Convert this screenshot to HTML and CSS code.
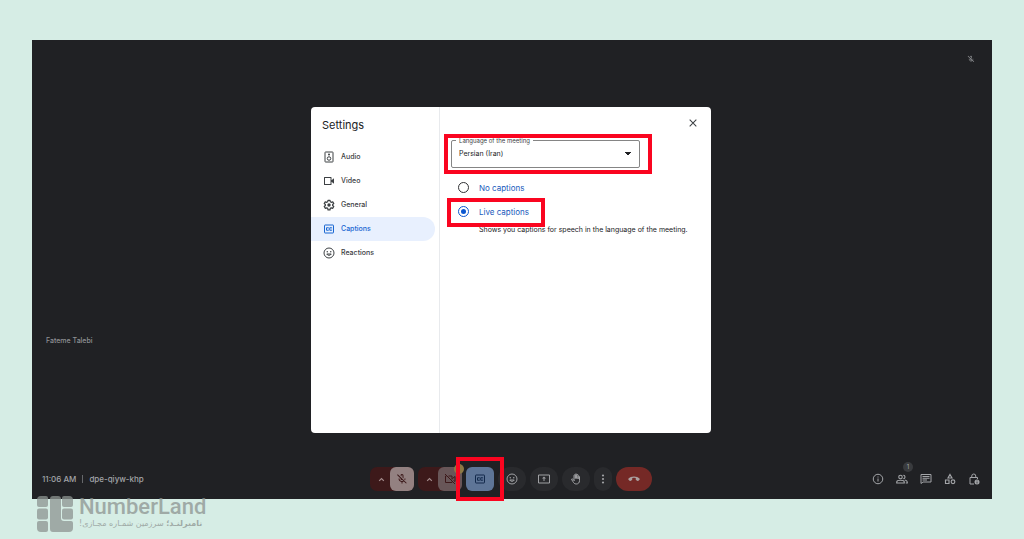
FILE: index.html
```html
<!DOCTYPE html>
<html lang="en">
<head>
<meta charset="utf-8">
<meta name="viewport" content="width=device-width, initial-scale=1">
<title>Meeting captions settings</title>
<link rel="stylesheet" href="styles.css">
</head>
<body>
<svg class="sprite" aria-hidden="true">
  <symbol id="mic-off" viewBox="0 0 24 24"><path d="M19 11h-2c0 .8-.2 1.500-.4 2.100l1.400 1.500c.6-1.100 1-2.300 1-3.600zM15 11V5a3 3 0 0 0-6-.2l2 2V5a1 1 0 0 1 2 0v4l2 2zM3.500 2.500 2.100 3.900 9 10.800V11a3 3 0 0 0 3.800 2.900l1.600 1.600A5 5 0 0 1 7 11H5a7 7 0 0 0 6 6.900V21h2v-3.100a7 7 0 0 0 2.800-1l4.300 4.300 1.400-1.400z"/></symbol>
  <symbol id="cam" viewBox="0 0 24 24"><path d="M17 10.500V5a1 1 0 0 0-1-1H3a1 1 0 0 0-1 1v14a1 1 0 0 0 1 1h13a1 1 0 0 0 1-1v-5.500l5 4v-11zM15 18H4V6h11z"/></symbol>
  <symbol id="cam-off" viewBox="0 0 24 24"><g fill="none" stroke="currentColor" stroke-width="2"><path d="M5 6H3v13h13v-2M9 6h7v7M17 11l5-4v10l-3-2M2 2l20 20"/></g></symbol>
  <symbol id="speaker" viewBox="0 0 24 24"><g fill="none" stroke="currentColor" stroke-width="2"><rect x="4" y="2" width="16" height="20" rx="1"/><circle cx="12" cy="15" r="3.500"/></g><circle cx="12" cy="7" r="2"/></symbol>
  <symbol id="gear" viewBox="0 0 24 24"><path fill="none" stroke="currentColor" stroke-width="2.500" stroke-linejoin="round" d="M10 2.500h4l.6 3 2 1.100 2.900-1 2 3.500-2.200 2v2l2.200 2-2 3.500-2.900-1-2 1.100-.6 3h-4l-.6-3-2-1.100-2.900 1-2-3.500 2.200-2v-2l-2.200-2 2-3.500 2.900 1 2-1.100z"/><circle cx="12" cy="12" r="3.400"/></symbol>
  <symbol id="cc" viewBox="0 0 24 24"><g fill="none" stroke="currentColor" stroke-width="2"><rect x="3" y="4" width="18" height="16" rx="1"/><path d="M11 10.500V9.500H7v5h4v-1M17.500 10.500V9.500h-4v5h4v-1"/></g></symbol>
  <symbol id="smile" viewBox="0 0 24 24"><g fill="none" stroke="currentColor" stroke-width="2"><circle cx="12" cy="12" r="10"/><path d="M7.500 14h9c-1.500 3.500-7.500 3.500-9 0z"/></g><circle cx="8.500" cy="9.500" r="1.500"/><circle cx="15.500" cy="9.500" r="1.500"/></symbol>
  <symbol id="present" viewBox="0 0 24 24"><path fill="none" stroke="currentColor" stroke-width="2" d="M1 4h22v16H1z"/><path d="M12 7l4 4h-3v5h-2v-5H8z"/></symbol>
  <symbol id="hand" viewBox="0 0 24 24"><path fill="none" stroke="currentColor" stroke-width="2" stroke-linejoin="round" stroke-linecap="round" d="M8 13V5a1.300 1.300 0 0 1 2.600 0v6V3a1.400 1.400 0 0 1 2.800 0v8-6.500a1.400 1.400 0 0 1 2.800 0V12 7.500a1.400 1.400 0 0 1 2.800 0V15c0 4.500-2.500 7-6.500 7-3.500 0-5-2-6.500-4.500L3 12.500c1.500-1 3-.5 4 1L8 15z"/></symbol>
  <symbol id="more" viewBox="0 0 24 24"><circle cx="12" cy="5" r="2.200"/><circle cx="12" cy="12" r="2.200"/><circle cx="12" cy="19" r="2.200"/></symbol>
  <symbol id="end" viewBox="0 0 24 24"><path d="M12 7C7.500 7 3.500 8.700.7 11.500a1 1 0 0 0 0 1.400l3 3a1 1 0 0 0 1.300.1l3-2a1 1 0 0 0 .5-.8v-3.300a12 12 0 0 1 7 0v3.300a1 1 0 0 0 .5.8l3 2a1 1 0 0 0 1.300-.1l3-3a1 1 0 0 0 0-1.400C20.500 8.700 16.500 7 12 7z"/></symbol>
  <symbol id="up" viewBox="0 0 24 24"><path fill="none" stroke="currentColor" stroke-width="4" d="M4 17l8-8 8 8"/></symbol>
  <symbol id="close" viewBox="0 0 24 24"><path fill="none" stroke="currentColor" stroke-width="2.500" d="M4 4l16 16M20 4 4 20"/></symbol>
  <symbol id="info" viewBox="0 0 24 24"><circle cx="12" cy="12" r="9.500" fill="none" stroke="currentColor" stroke-width="2"/><path d="M11 11h2v6h-2zM11 7h2v2h-2z"/></symbol>
  <symbol id="people" viewBox="0 0 24 24"><g fill="none" stroke="currentColor" stroke-width="2.300"><circle cx="9" cy="8" r="3.500"/><path d="M1.500 20v-2c0-2 4-3.500 7.500-3.500s7.500 1.500 7.500 3.500v2zM14.500 4.500a3.500 3.500 0 0 1 0 7M17.500 14c3 .7 5 2 5 4v2h-3"/></g></symbol>
  <symbol id="chat" viewBox="0 0 24 24"><path fill="none" stroke="currentColor" stroke-width="2" d="M2 3h20v15H6l-4 3z"/><path d="M5 6h14v2H5zM5 9.500h14v2H5zM5 13h9v2H5z"/></symbol>
  <symbol id="shapes" viewBox="0 0 24 24"><g fill="none" stroke="currentColor" stroke-width="2.300"><path d="M12 3l4 7H8zM3 14h7v7H3z"/><circle cx="18" cy="17.500" r="3.700"/></g></symbol>
  <symbol id="lock" viewBox="0 0 24 24"><path fill="none" stroke="currentColor" stroke-width="2" d="M12 22H4V9h15v3M7.500 9V6a4 4 0 0 1 8 0v3"/><circle cx="18" cy="18" r="5"/><path fill="#202124" d="M17.300 17.500h1.500V21h-1.500zM17.300 15h1.500v1.500h-1.500z"/></symbol>
</svg>

<main class="meeting">
  <div class="stage">
    <svg class="icon muted" role="img" aria-label="Muted"><use href="#mic-off"/></svg>
    <p class="participant">Fateme Talebi</p>
  </div>

  <div class="bar">
    <div class="meta"><span>11:06 AM</span><span class="rule"></span><span>dpe-qiyw-khp</span></div>
    <div class="controls">
      <div class="split">
        <button class="caret" aria-label="Audio options"><svg class="icon tiny"><use href="#up"/></svg></button>
        <button class="toggle" aria-label="Turn on microphone"><svg class="icon"><use href="#mic-off"/></svg></button>
      </div>
      <div class="split">
        <button class="caret" aria-label="Video options"><svg class="icon tiny"><use href="#up"/></svg></button>
        <button class="toggle dim" aria-label="Turn on camera"><svg class="icon"><use href="#cam-off"/></svg><span class="alert"></span></button>
      </div>
      <button class="round captions marked" aria-label="Captions"><svg class="icon"><use href="#cc"/></svg></button>
      <button class="round" aria-label="Send a reaction"><svg class="icon"><use href="#smile"/></svg></button>
      <button class="round" aria-label="Present now"><svg class="icon"><use href="#present"/></svg></button>
      <button class="round" aria-label="Raise hand"><svg class="icon"><use href="#hand"/></svg></button>
      <button class="round narrow" aria-label="More options"><svg class="icon"><use href="#more"/></svg></button>
      <button class="round leave" aria-label="Leave call"><svg class="icon"><use href="#end"/></svg></button>
    </div>
    <div class="tools">
      <button class="tool" aria-label="Meeting details"><svg class="icon"><use href="#info"/></svg></button>
      <button class="tool" aria-label="People"><svg class="icon"><use href="#people"/></svg><span class="count">1</span></button>
      <button class="tool" aria-label="Chat"><svg class="icon"><use href="#chat"/></svg></button>
      <button class="tool" aria-label="Activities"><svg class="icon"><use href="#shapes"/></svg></button>
      <button class="tool" aria-label="Host controls"><svg class="icon"><use href="#lock"/></svg></button>
    </div>
  </div>

  <div class="overlay">
    <section class="dialog" role="dialog" aria-labelledby="title">
      <div class="sidebar">
        <h1 class="title" id="title">Settings</h1>
        <nav class="nav">
          <a class="item" href="#audio"><svg class="icon"><use href="#speaker"/></svg>Audio</a>
          <a class="item" href="#video"><svg class="icon"><use href="#cam"/></svg>Video</a>
          <a class="item" href="#general"><svg class="icon"><use href="#gear"/></svg>General</a>
          <a class="item current" href="#captions" aria-current="page"><svg class="icon"><use href="#cc"/></svg>Captions</a>
          <a class="item" href="#reactions"><svg class="icon"><use href="#smile"/></svg>Reactions</a>
        </nav>
      </div>
      <form class="panel">
        <button class="close" type="button" aria-label="Close"><svg class="icon"><use href="#close"/></svg></button>
        <div class="field marked">
          <label class="field-label" for="language">Language of the meeting</label>
          <select class="select" id="language"><option>Persian (Iran)</option></select>
        </div>
        <div class="choices">
          <label class="choice"><input class="radio" type="radio" name="captions">No captions</label>
          <label class="choice marked"><input class="radio" type="radio" name="captions" checked>Live captions</label>
          <p class="hint">Shows you captions for speech in the language of the meeting.</p>
        </div>
      </form>
    </section>
  </div>
</main>

<footer class="brand">
  <svg class="logo" viewBox="0 0 36 36" role="img" aria-label="NumberLand logo">
    <path d="M4 0h5a2 2 0 0 1 2 2v7a2 2 0 0 1-2 2H2a2 2 0 0 1-2-2V4a4 4 0 0 1 4-4z"/>
    <rect y="12.500" width="11" height="11" rx="2"/>
    <path d="M2 25h7a2 2 0 0 1 2 2v7a2 2 0 0 1-2 2H4a4 4 0 0 1-4-4v-5a2 2 0 0 1 2-2z"/>
    <path d="M16 0h5a3 3 0 0 1 3 3v19a3 3 0 0 0 3 3h7a2 2 0 0 1 2 2v5a4 4 0 0 1-4 4H16a3 3 0 0 1-3-3V3a3 3 0 0 1 3-3z"/>
    <path d="M27 0h5a4 4 0 0 1 4 4v5a2 2 0 0 1-2 2h-7a2 2 0 0 1-2-2V2a2 2 0 0 1 2-2z"/>
    <rect x="25" y="12.500" width="11" height="11" rx="2"/>
  </svg>
  <div class="brand-text">
    <span class="name">NumberLand</span>
    <span class="tagline" lang="fa" dir="rtl"><b>نامبرلنـد؛</b> سرزمین شمـاره مجـازی!</span>
  </div>
</footer>
</body>
</html>
```

FILE: styles.css
```css
* { box-sizing: border-box; }

body {
  margin: 0;
  min-height: 100vh;
  padding: 40px 32px 7px;
  display: flex;
  flex-direction: column;
  background: #d6ede5;
  font-family: Inter, "Open Sans", sans-serif;
  font-size: 7px;
  line-height: 12px;
}

button { border: 0; padding: 0; background: none; color: inherit; font: inherit; }
p, h1 { margin: 0; }
.sprite { position: absolute; width: 0; height: 0; }
.icon { display: block; width: 12px; height: 12px; fill: currentColor; flex: none; }
.tiny { width: 7px; height: 7px; }

.meeting {
  position: relative;
  flex: 1;
  display: flex;
  flex-direction: column;
  background: #202124;
  color: #8f9194;
}

.stage {
  flex: 1;
  display: flex;
  flex-direction: column;
  justify-content: space-between;
  padding: 15px 17px 112px 14px;
}
.muted { align-self: flex-end; width: 8px; height: 8px; }
.participant { font-weight: 500; }

.bar {
  display: grid;
  grid-template-columns: 1fr auto 1fr;
  align-items: center;
  padding: 8px 6px 8px 4px;
}
.meta { display: flex; align-items: center; gap: 6px; padding-left: 6px; font-size: 8px; font-weight: 500; color: #a3a5a8; }
.rule { width: 1px; height: 8px; background: #66686b; }

.controls { display: flex; gap: 4px; }
.split { display: flex; border-radius: 7px; background: #3d191a; color: #a58d8d; }
.caret { width: 20px; height: 24px; display: grid; place-items: center; padding-left: 3px; }
.toggle {
  position: relative;
  width: 24px;
  height: 24px;
  display: grid;
  place-items: center;
  border-radius: 6px;
  background: #938181;
  color: #3c191a;
}
.dim { background: #685658; }
.alert { position: absolute; top: -3px; right: -2px; width: 10px; height: 10px; border-radius: 50%; background: #8d7945; }
.round {
  width: 28px;
  height: 24px;
  display: grid;
  place-items: center;
  border-radius: 12px;
  background: #292a2d;
  color: #a0a1a4;
}
.captions { border-radius: 6px; background: #5e7597; color: #12294b; }
.narrow { width: 18px; border-radius: 9px; }
.leave { width: 36px; background: #752926; color: #aaa0a0; }

.tools { display: flex; justify-content: flex-end; color: #a3a5a8; }
.tool { position: relative; width: 24px; height: 24px; display: grid; place-items: center; }
.count {
  position: absolute;
  top: -5px;
  right: 1px;
  width: 10px;
  height: 10px;
  border-radius: 50%;
  background: #393b3e;
  font-size: 6px;
  line-height: 10px;
}

.overlay {
  position: absolute;
  inset: 0;
  display: grid;
  place-items: center;
  padding-right: 2px;
  pointer-events: none;
}
.dialog {
  width: 400px;
  max-width: 100%;
  min-height: 326px;
  display: grid;
  grid-template-columns: 129px 1fr;
  border-radius: 4px;
  background: #fff;
  color: #3c4043;
  pointer-events: auto;
}
.sidebar { border-right: 1px solid #e8eaed; padding-top: 9px; }
.title { padding-left: 11px; font-size: 11px; line-height: 18px; font-weight: 400; color: #202124; }
.nav { display: flex; flex-direction: column; padding: 11px 4px 0 0; }
.item {
  display: flex;
  align-items: center;
  gap: 6px;
  height: 24px;
  padding-left: 12px;
  border-radius: 0 12px 12px 0;
  color: #3c4043;
  font-weight: 500;
  text-decoration: none;
}
.current { background: #e8f0fe; color: #1967d2; }

.panel { display: flex; flex-direction: column; padding: 10px 12px 10px 11px; }
.close { align-self: flex-end; width: 12px; height: 12px; display: grid; place-items: center; color: #3c4043; }
.close .icon { width: 10px; height: 10px; }

.field { width: 189px; margin-top: 11px; }
.field-label {
  position: absolute;
  top: -4px;
  left: 5px;
  padding: 0 3px;
  background: #fff;
  font-size: 6px;
  line-height: 10px;
}
.select {
  display: block;
  width: 100%;
  height: 28px;
  padding: 0 7px;
  border: 1px solid #858585;
  border-radius: 2px;
  appearance: none;
  background: conic-gradient(from -45deg at 50% 100%, #202124 90deg, transparent 0) no-repeat right 8px center / 6px 3px;
  color: #202124;
  font: inherit;
}
.choices { display: flex; flex-direction: column; align-items: flex-start; padding: 8px 0 0 7px; }
.choice { display: flex; align-items: center; gap: 10px; height: 24px; font-size: 8px; color: #185abc; }
.radio {
  appearance: none;
  display: grid;
  place-items: center;
  width: 11px;
  height: 11px;
  margin: 0;
  border: 1px solid #303134;
  border-radius: 50%;
}
.radio:checked { border-color: #0b57d0; }
.radio:checked::before { content: ""; width: 5px; height: 5px; border-radius: 50%; background: #0b57d0; }
.hint { padding-left: 21px; color: #202124; }

/* Caret points down: the wedge opens upward from the bottom centre */
.select { background-image: conic-gradient(from -45deg at 50% 100%, #202124 90deg, transparent 0); }

.marked { position: relative; }
.marked::after { content: ""; position: absolute; border: 4px solid #fa0520; pointer-events: none; }
.captions.marked::after { inset: -10px; }
.field.marked::after { inset: -6px -12px -6px -7px; }
.choice.marked::after { inset: -2px -16px -3px -11px; }

.brand {
  position: relative;
  display: flex;
  align-items: center;
  gap: 6px;
  margin-top: -3px;
  padding-left: 5px;
  color: #8d9491;
  opacity: 0.75;
}
.logo { width: 36px; height: 36px; fill: currentColor; }
.brand-text { display: flex; flex-direction: column; align-items: flex-start; }
.name { font-family: Roboto, sans-serif; font-size: 22px; line-height: 20px; font-weight: 500; }
.tagline { font-family: "DejaVu Sans", sans-serif; font-size: 8px; line-height: 14px; }
```
